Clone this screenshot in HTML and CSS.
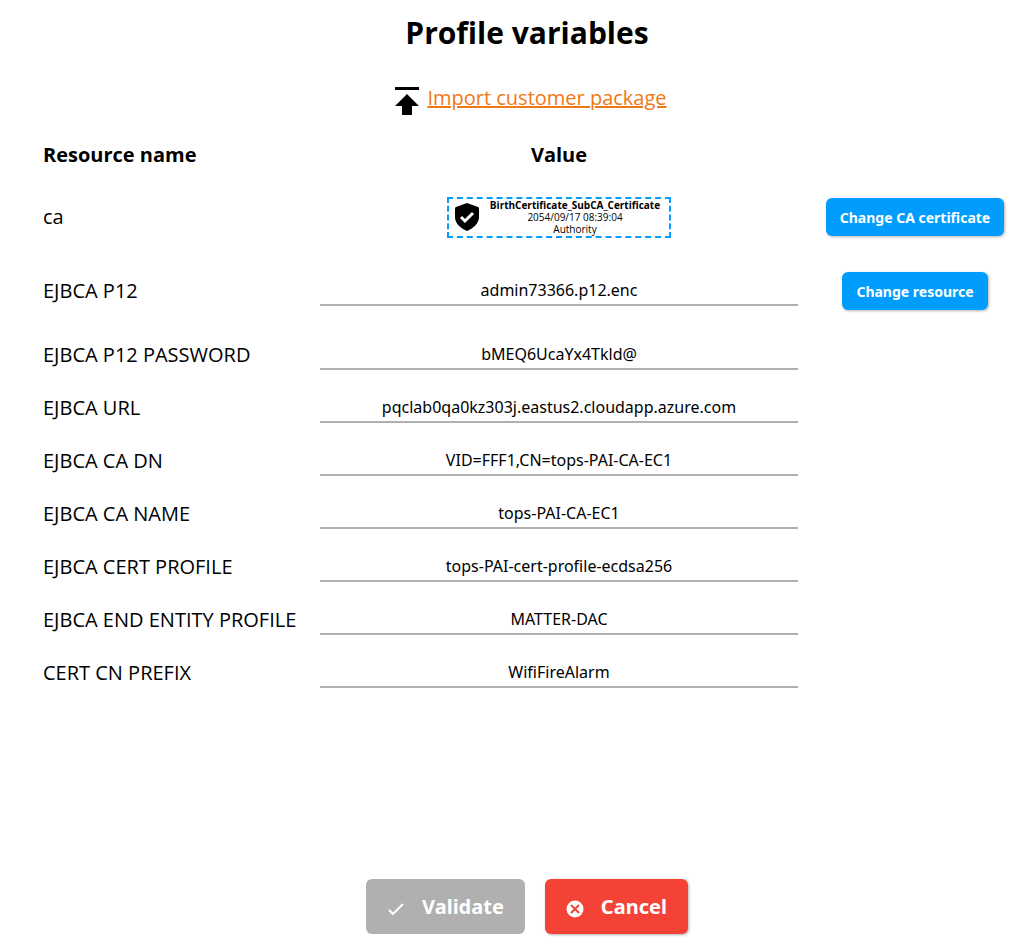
FILE: index.html
```html
<!DOCTYPE html>
<html lang="en">
<head>
  <meta charset="UTF-8">
  <meta name="viewport" content="width=device-width, initial-scale=1.0">
  <title>Profile variables</title>
  <link rel="stylesheet" href="styles.css">
</head>
<body>
  <main class="profile">
    <h1 class="profile-title">Profile variables</h1>

    <div class="import">
      <svg class="import-icon" viewBox="0 0 32 28" aria-hidden="true">
        <path d="M8 0h24v3H8zM20 7l12 12h-7v9H15v-9H8z"/>
      </svg>
      <a class="import-link" href="#">Import customer package</a>
    </div>

    <form id="variables-form" class="variables-form">
      <table class="variables">
        <thead>
          <tr>
            <th class="col-name">Resource name</th>
            <th class="col-value">Value</th>
            <td class="col-action"></td>
          </tr>
        </thead>
        <tbody>
          <tr class="row-resource">
            <td>ca</td>
            <td>
              <div class="certificate">
                <svg class="certificate-icon" viewBox="0 0 24 28" aria-hidden="true">
                  <path d="M12 0l11 4q1 0 1 2v8c0 6-5 11-12 14C5 25 0 20 0 14V6q0-2 1-2z"/>
                  <path class="certificate-check" d="M6 14l4 4 8-8"/>
                </svg>
                <div class="certificate-text">
                  <b>BirthCertificate_SubCA_Certificate</b><br>
                  2054/09/17 08:39:04<br>
                  Authority
                </div>
              </div>
            </td>
            <td class="col-action"><button type="button" class="btn btn-change">Change CA certificate</button></td>
          </tr>
          <tr class="row-resource">
            <td><label for="p12">EJBCA P12</label></td>
            <td><input type="text" id="p12" value="admin73366.p12.enc" readonly></td>
            <td class="col-action"><button type="button" class="btn btn-change">Change resource</button></td>
          </tr>
          <tr>
            <td><label for="p12-password">EJBCA P12 PASSWORD</label></td>
            <td><input type="text" id="p12-password" value="bMEQ6UcaYx4Tkld@"></td>
            <td></td>
          </tr>
          <tr>
            <td><label for="url">EJBCA URL</label></td>
            <td><input type="text" id="url" value="pqclab0qa0kz303j.eastus2.cloudapp.azure.com"></td>
            <td></td>
          </tr>
          <tr>
            <td><label for="ca-dn">EJBCA CA DN</label></td>
            <td><input type="text" id="ca-dn" value="VID=FFF1,CN=tops-PAI-CA-EC1"></td>
            <td></td>
          </tr>
          <tr>
            <td><label for="ca-name">EJBCA CA NAME</label></td>
            <td><input type="text" id="ca-name" value="tops-PAI-CA-EC1"></td>
            <td></td>
          </tr>
          <tr>
            <td><label for="cert-profile">EJBCA CERT PROFILE</label></td>
            <td><input type="text" id="cert-profile" value="tops-PAI-cert-profile-ecdsa256"></td>
            <td></td>
          </tr>
          <tr>
            <td><label for="entity-profile">EJBCA END ENTITY PROFILE</label></td>
            <td><input type="text" id="entity-profile" value="MATTER-DAC"></td>
            <td></td>
          </tr>
          <tr>
            <td><label for="cn-prefix">CERT CN PREFIX</label></td>
            <td><input type="text" id="cn-prefix" value="WifiFireAlarm"></td>
            <td></td>
          </tr>
        </tbody>
      </table>
    </form>

    <div class="actions">
      <button type="submit" form="variables-form" class="btn btn-large btn-validate" disabled>
        <svg class="btn-icon" viewBox="0 0 18 18" aria-hidden="true">
          <path class="icon-line" d="M2 10l4 4L16 4"/>
        </svg>
        Validate
      </button>
      <button type="button" class="btn btn-large btn-cancel">
        <svg class="btn-icon" viewBox="0 0 18 18" aria-hidden="true">
          <circle cx="9" cy="9" r="8.500" fill="#fff"/>
          <path class="icon-cross" d="M5 5l8 8M13 5l-8 8"/>
        </svg>
        Cancel
      </button>
    </div>
  </main>
</body>
</html>
```
FILE: styles.css
```css
* {
  box-sizing: border-box;
}
body {
  margin: 0;
  color: #000;
  background-color: #fff;
  font-family: "Open Sans", sans-serif;
  font-size: 20px;
}

/* Page */
.profile {
  display: flex;
  flex-direction: column;
  min-height: 100vh;
  padding: 12px 0 18px 20px;
}
.profile-title {
  margin: 0;
  font-size: 30px;
  line-height: 42px;
  text-align: center;
}

/* Import link */
.import {
  display: flex;
  align-items: center;
  justify-content: center;
  gap: 8px;
  height: 28px;
  margin-top: 33px;
}
.import-icon {
  width: 32px;
  height: 28px;
}
.import-link {
  color: #f07814;
  line-height: 28px;
  padding-bottom: 6px;
}

/* Variables table */
.variables-form {
  padding: 15px 12px 0 13px;
}
.variables {
  width: 100%;
  table-layout: fixed;
  border-collapse: collapse;
}
.variables th,
.variables td {
  height: 53px;
  padding: 0 10px;
  line-height: 28px;
  text-align: left;
}
.variables thead th,
.variables thead td {
  height: 50px;
}
.variables .row-resource td {
  height: 74px;
}
.variables .col-name {
  width: 277px;
}
.variables .col-value {
  text-align: center;
}
.variables .col-action {
  width: 214px;
  text-align: center;
}
.variables input {
  display: block;
  width: 100%;
  height: 30px;
  padding: 0;
  color: #000;
  font-family: "Noto Sans", sans-serif;
  font-size: 16px;
  text-align: center;
  border: none;
  border-bottom: 2px solid #b0b0b0;
  border-radius: 0;
  background: transparent;
}

/* Certificate card */
.certificate {
  display: flex;
  align-items: center;
  gap: 11px;
  width: fit-content;
  margin: 0 auto;
  padding: 0 9px 1px 6px;
  border: 2px dashed #009dff;
}
.certificate-icon {
  width: 24px;
  height: 28px;
}
.certificate-check {
  fill: none;
  stroke: #fff;
  stroke-width: 3;
}
.certificate-text {
  font-size: 10px;
  line-height: 12px;
  text-align: center;
}

/* Buttons */
.btn {
  color: #fff;
  font-family: "Noto Sans", sans-serif;
  font-weight: bold;
  border: none;
  border-radius: 6px;
  box-shadow: 1px 1px 3px rgba(0, 0, 0, 0.3);
  cursor: pointer;
}
.btn-change {
  height: 38px;
  padding: 0 14px;
  font-size: 14px;
  background-color: #009dff;
}
.actions {
  display: flex;
  justify-content: center;
  gap: 20px;
  margin-top: auto;
}
.btn-large {
  display: flex;
  align-items: center;
  gap: 17px;
  height: 55px;
  padding: 0 21px;
  font-size: 20px;
}
.btn-validate {
  background-color: #b0b0b0;
  box-shadow: none;
  cursor: default;
}
.btn-cancel {
  background-color: #f44336;
}
.btn-icon {
  width: 18px;
  height: 18px;
  margin-top: 4px;
}
.icon-line {
  fill: none;
  stroke: #fff;
  stroke-width: 2;
}
.icon-cross {
  fill: none;
  stroke: #f44336;
  stroke-width: 2;
}
```
